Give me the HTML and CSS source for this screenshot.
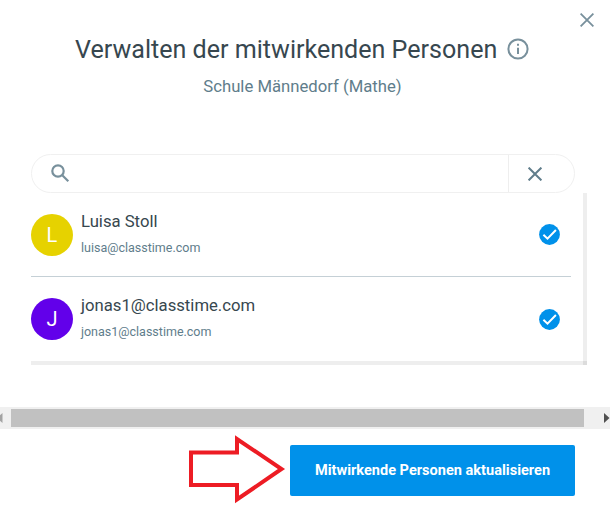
FILE: index.html
```html
<!DOCTYPE html>
<html lang="de">
<head>
    <meta charset="UTF-8">
    <meta name="viewport" content="width=device-width, initial-scale=1.0">
    <title>Verwalten der mitwirkenden Personen</title>
    <link rel="stylesheet" href="styles.css">
</head>
<body>
    <div class="dialog">
        <button class="close" type="button" aria-label="Schliessen">
            <svg width="14" height="14" viewBox="0 0 14 14"><path d="M.6 .6L13.4 13.4M13.4 .6L.6 13.4"/></svg>
        </button>

        <header class="header">
            <h1>
                <span class="title">Verwalten der mitwirkenden Personen</span>
                <svg class="info" width="22" height="22" viewBox="0 0 22 22">
                    <circle cx="11" cy="11" r="9.6"/>
                    <path d="M11 9.8V16M11 5.8V7.8"/>
                </svg>
            </h1>
            <p class="school">Schule Männedorf (Mathe)</p>
        </header>

        <div class="search">
            <svg class="magnifier" width="19" height="19" viewBox="0 0 19 19">
                <circle cx="7" cy="7" r="5.7"/>
                <path d="M11.3 11.3L17.3 17.3"/>
            </svg>
            <input type="text" aria-label="Suchen">
            <button class="clear" type="button" aria-label="Leeren">
                <svg width="14" height="14" viewBox="0 0 14 14"><path d="M.6 .6L13.4 13.4M13.4 .6L.6 13.4"/></svg>
            </button>
        </div>

        <div class="list">
            <div class="person">
                <div class="avatar yellow">L</div>
                <div class="details">
                    <div class="name">Luisa Stoll</div>
                    <div class="email">luisa@classtime.com</div>
                </div>
                <svg class="check" width="21" height="21" viewBox="0 0 21 21">
                    <circle cx="10.5" cy="10.5" r="10.4"/>
                    <path d="M4.4 10.7L8.5 14.6L16.9 6"/>
                </svg>
            </div>
            <div class="person">
                <div class="avatar purple">J</div>
                <div class="details">
                    <div class="name">jonas1@classtime.com</div>
                    <div class="email">jonas1@classtime.com</div>
                </div>
                <svg class="check" width="21" height="21" viewBox="0 0 21 21">
                    <circle cx="10.5" cy="10.5" r="10.4"/>
                    <path d="M4.4 10.7L8.5 14.6L16.9 6"/>
                </svg>
            </div>
            <div class="track-right"></div>
            <div class="track-bottom"></div>
        </div>

        <div class="scrollbar">
            <svg width="11" height="22" viewBox="0 0 11 22"><path d="M2.5 6V16L-3 11Z" fill="#a3a3a3"/></svg>
            <div class="thumb"></div>
            <svg width="26" height="22" viewBox="0 0 26 22"><path d="M20 6V16L25.5 11Z" fill="#505050"/></svg>
        </div>

        <footer class="footer">
            <svg class="arrow" width="98" height="70" viewBox="0 0 98 70">
                <path d="M3 17.5H49V4L93.5 34L49 64.5V50H3Z"/>
            </svg>
            <button class="update" type="button">Mitwirkende Personen aktualisieren</button>
        </footer>
    </div>
</body>
</html>
```

FILE: styles.css
```css
body {
    margin: 0;
    background-color: white;
    font-family: Roboto, Arial, sans-serif;
    color: #37474f;
}
button {
    border: none;
    padding: 0;
    background: none;
    font-family: inherit;
    cursor: pointer;
}
svg {
    display: block;
    flex: none;
}
.dialog {
    position: relative;
    width: 610px;
    height: 514px;
    overflow: hidden;
}
.close {
    position: absolute;
    top: 13px;
    right: 16px;
}
.close path {
    stroke: #78909c;
    stroke-width: 1.8;
}
.header {
    height: 154px;
    padding-top: 34px;
    box-sizing: border-box;
}
h1 {
    display: flex;
    align-items: center;
    gap: 10px;
    margin: 0 0 0 75px;
    height: 30px;
    font-size: 25.08px;
    font-weight: 400;
    white-space: nowrap;
}
.info {
    fill: none;
    stroke: #78909c;
    stroke-width: 2;
}
.school {
    margin: 13px 5px 0 0;
    font-size: 16.7px;
    line-height: 20px;
    text-align: center;
    color: #607d8b;
}
.search {
    display: flex;
    align-items: center;
    width: 544px;
    height: 39px;
    margin-left: 31px;
    border: 1px solid #f0f0f0;
    border-radius: 20px;
    box-sizing: border-box;
}
.magnifier {
    margin-left: 19px;
    fill: none;
    stroke: #78909c;
    stroke-width: 2.2;
}
.search input {
    flex: 1;
    min-width: 0;
    border: none;
    outline: none;
    background: none;
    font-size: 16px;
}
.clear {
    width: 66px;
    height: 37px;
    padding-left: 19px;
    border-left: 1px solid #eeeeee;
}
.clear path {
    stroke: #607d8b;
    stroke-width: 2;
}
.list {
    position: relative;
    width: 557px;
    height: 172px;
    margin-left: 31px;
}
.person {
    display: flex;
    align-items: center;
    width: 540px;
    height: 83px;
}
.person + .person {
    border-top: 1px solid #c5d0d6;
    height: 84px;
}
.avatar {
    width: 42px;
    height: 42px;
    border-radius: 50%;
    color: white;
    font-size: 20px;
    line-height: 42px;
    text-align: center;
}
.yellow {
    background-color: #e6d200;
}
.purple {
    background-color: #6200ea;
}
.details {
    flex: 1;
    padding: 0 0 3px 8px;
}
.name {
    font-size: 16.7px;
    line-height: 20px;
}
.email {
    margin-top: 9px;
    font-size: 12.5px;
    line-height: 14px;
    color: #607d8b;
}
.check {
    margin-right: 11px;
}
.check circle {
    fill: #0091ea;
}
.check path {
    fill: none;
    stroke: white;
    stroke-width: 2;
}
.track-right {
    position: absolute;
    top: 0;
    right: 1px;
    width: 4px;
    height: 172px;
    background-color: #eeeeee;
}
.track-bottom {
    position: absolute;
    bottom: 0;
    left: 0;
    width: 552px;
    height: 4px;
    border-right: 4px solid #dcdcdc;
    background-color: #eeeeee;
}
.scrollbar {
    display: flex;
    align-items: center;
    height: 22px;
    margin-top: 42px;
    background-color: #f0f0f0;
}
.thumb {
    flex: 1;
    height: 18px;
    background-color: #c1c1c1;
}
.footer {
    display: flex;
    align-items: center;
    height: 82px;
    padding-left: 188px;
}
.arrow path {
    fill: none;
    stroke: #ed1c24;
    stroke-width: 4;
}
.update {
    width: 285px;
    height: 51px;
    margin-left: 4px;
    border-radius: 2px;
    background-color: #0091ea;
    color: white;
    font-size: 14.55px;
    font-weight: 700;
}
```
